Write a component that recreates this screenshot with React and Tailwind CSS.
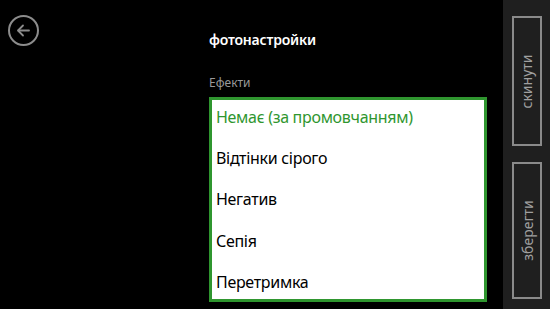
import React from "react";

const ITEMS = ["Немає (за промовчанням)", "Відтінки сірого", "Негатив", "Сепія", "Перетримка"];

export default function App() {
  return (
    <div
      className="flex w-[550px] h-[309px] bg-black overflow-hidden text-white"
      style={{ fontFamily: '"Noto Sans", "Open Sans", sans-serif' }}
    >
      {/* back button column */}
      <div className="w-[209px] shrink-0 pt-[15px] pl-[8px]">
        <div className="w-[31px] h-[31px] rounded-full border-2 border-[#8c8c8c] flex items-center justify-center">
          <svg width="17" height="17" viewBox="0 0 17 17" fill="none" stroke="#8c8c8c" strokeWidth="1.8" strokeLinecap="round" strokeLinejoin="round">
            <path d="M14 8.5H3.5" />
            <path d="M8 3.5L3 8.5L8 13.5" />
          </svg>
        </div>
      </div>

      {/* content */}
      <div className="w-[278px] shrink-0 flex flex-col">
        <div className="pt-[30px] text-[14px] font-semibold leading-[20px] tracking-[-0.2px]">фотонастройки</div>
        <div className="mt-[25px] text-[12px] leading-[16px] text-[#9a9a9a]">Ефекти</div>
        <div className="mt-[6px] h-[205px] bg-white border-[3px] border-[#2f962f] overflow-hidden">
          <div className="-mt-[4px] flex flex-col">
            {ITEMS.map((item, i) => (
              <div
                key={item}
                className={`h-[41.3px] shrink-0 flex items-center pl-[4px] text-[16px] tracking-[-0.3px] ${i === 0 ? "text-[#2f962f]" : "text-black"}`}
              >
                {item}
              </div>
            ))}
          </div>
        </div>
      </div>

      <div className="flex-1" />

      {/* app bar */}
      <div className="w-[47px] shrink-0 bg-[#1f1f1f] flex flex-col pl-[9px] pt-[16px] gap-[16px]">
        <div className="w-[30px] h-[130px] border-2 border-[#8a8a8a] flex items-center justify-center">
          <span className="-rotate-90 whitespace-nowrap text-[14px] text-[#a0a0a0]">скинути</span>
        </div>
        <div className="w-[30px] h-[137px] border-2 border-[#8a8a8a] flex items-center justify-center">
          <span className="-rotate-90 whitespace-nowrap text-[14px] text-[#a0a0a0]">зберегти</span>
        </div>
      </div>
    </div>
  );
}
